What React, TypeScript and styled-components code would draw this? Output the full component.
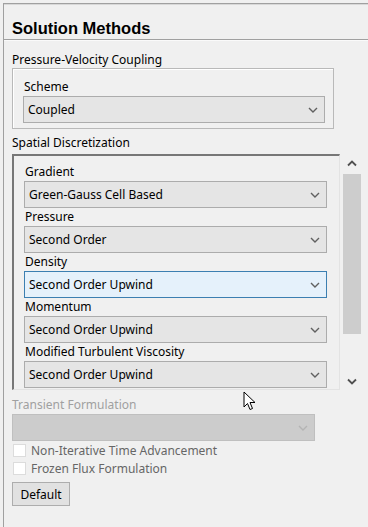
import React from "react";
import styled, { createGlobalStyle } from "styled-components";

const GlobalStyle = createGlobalStyle`
  html, body {
    margin: 0;
    padding: 0;
    background: #f0f0f0;
  }
  body {
    font-family: "Noto Sans", "Open Sans", sans-serif;
    font-size: 12px;
    color: #000;
  }
`;

const Chevron = ({ color = "#606060" }: { color?: string }) => (
  <svg width="10" height="6" viewBox="0 0 10 6">
    <path d="M1 1 L5 5 L9 1" fill="none" stroke={color} strokeWidth="1.4" />
  </svg>
);

type SelectProps = {
  value: string;
  focused?: boolean;
  disabled?: boolean;
  width?: number;
};

const DropDown = ({ value, focused, disabled, width }: SelectProps) => (
  <SelectBox $focused={focused} $disabled={disabled} $width={width}>
    <SelectText>{value}</SelectText>
    <Chevron color={disabled ? "#b4b4b4" : "#606060"} />
  </SelectBox>
);

const fields = [
  { label: "Gradient", value: "Green-Gauss Cell Based" },
  { label: "Pressure", value: "Second Order" },
  { label: "Density", value: "Second Order Upwind", focused: true },
  { label: "Momentum", value: "Second Order Upwind" },
  { label: "Modified Turbulent Viscosity", value: "Second Order Upwind" },
];

const App = () => {
  return (
    <Root>
      <GlobalStyle />
      <Panel>
        <Header>Solution Methods</Header>
        <Body>
          <SectionLabel $top={11}>Pressure-Velocity Coupling</SectionLabel>
          <GroupBox>
            <FieldLabel>Scheme</FieldLabel>
            <DropDown value="Coupled" width={302} />
          </GroupBox>
          <SectionLabel $top={5}>Spatial Discretization</SectionLabel>
          <ScrollArea>
            <ScrollContent>
              {fields.map((f) => (
                <Field key={f.label}>
                  <FieldLabel>{f.label}</FieldLabel>
                  <DropDown value={f.value} focused={f.focused} width={303} />
                </Field>
              ))}
            </ScrollContent>
            <ScrollBar>
              <ArrowBtn>
                <svg width="10" height="7" viewBox="0 0 10 7">
                  <path d="M1 5.5 L5 1.5 L9 5.5" fill="none" stroke="#505050" strokeWidth="1.8" />
                </svg>
              </ArrowBtn>
              <Track>
                <Thumb />
              </Track>
              <ArrowBtn>
                <svg width="10" height="7" viewBox="0 0 10 7">
                  <path d="M1 1.5 L5 5.5 L9 1.5" fill="none" stroke="#505050" strokeWidth="1.8" />
                </svg>
              </ArrowBtn>
            </ScrollBar>
          </ScrollArea>
          <DisabledLabel>Transient Formulation</DisabledLabel>
          <DropDown value="" disabled width={303} />
          <CheckRow>
            <CheckBox />
            <CheckText>Non-Iterative Time Advancement</CheckText>
          </CheckRow>
          <CheckRow>
            <CheckBox />
            <CheckText>Frozen Flux Formulation</CheckText>
          </CheckRow>
          <Button>Default</Button>
        </Body>
      </Panel>
      <Cursor width="13" height="21" viewBox="0 0 13 21">
        <path
          d="M1 1 L1 16 L4.5 12.5 L7 18.5 L9.5 17.5 L7 11.5 L12 11.5 Z"
          fill="#fff"
          stroke="#000"
          strokeWidth="1"
        />
      </Cursor>
    </Root>
  );
};

export default App;

const Root = styled.div`
  position: relative;
  width: 368px;
  height: 527px;
  padding: 3px 0 0 3px;
  box-sizing: border-box;
  overflow: hidden;
`;

const Panel = styled.div`
  height: 100%;
  border-top: 1px solid #a0a0a0;
  border-left: 1px solid #a0a0a0;
  box-shadow: inset 0 1px 0 #d8d8d8;
`;

const Header = styled.div`
  height: 36px;
  padding: 0 0 1px 8px;
  display: flex;
  align-items: flex-end;
  box-sizing: border-box;
  font-family: "Liberation Sans", Arial, sans-serif;
  font-weight: bold;
  font-size: 16.5px;
  border-bottom: 1px solid #a0a0a0;
  box-shadow: 0 1px 0 #fafafa;
`;

const Body = styled.div`
  padding-left: 8px;
  display: flex;
  flex-direction: column;
  align-items: flex-start;
`;

const SectionLabel = styled.div<{ $top: number }>`
  margin-top: ${(p) => p.$top}px;
  height: 18px;
  line-height: 18px;
`;

const GroupBox = styled.div`
  width: 322px;
  height: 61px;
  box-sizing: border-box;
  margin-top: -1px;
  border: 1px solid #b9b9b9;
  box-shadow: inset 1px 1px 0 #fff;
  padding: 9px 0 0 10px;
`;

const FieldLabel = styled.div`
  height: 18px;
  line-height: 18px;
  padding-left: 1px;
`;

const SelectBox = styled.div<{ $focused?: boolean; $disabled?: boolean; $width?: number }>`
  width: ${(p) => p.$width ?? 302}px;
  height: 27px;
  box-sizing: border-box;
  display: flex;
  align-items: center;
  justify-content: space-between;
  padding: 0 6px 0 4px;
  background: ${(p) => (p.$focused ? "#e5f1fb" : p.$disabled ? "#cccccc" : "#e5e5e5")};
  border: 1px solid ${(p) => (p.$focused ? "#3c7fb1" : p.$disabled ? "#bfbfbf" : "#acacac")};
`;

const SelectText = styled.span`
  font-size: 12px;
`;

const ScrollArea = styled.div`
  display: flex;
  height: 236px;
  margin-top: 2px;
`;

const ScrollContent = styled.div`
  width: 328px;
  box-sizing: border-box;
  border-top: 2px solid #777;
  border-left: 2px solid #777;
  border-right: 1px solid #e3e3e3;
  border-bottom: 1px solid #e3e3e3;
  padding: 7px 0 0 10px;
  overflow: hidden;
`;

const Field = styled.div``;

const ScrollBar = styled.div`
  width: 20px;
  margin-left: 1px;
  display: flex;
  flex-direction: column;
`;

const ArrowBtn = styled.div`
  height: 18px;
  display: flex;
  align-items: center;
  justify-content: center;
  padding-left: 2px;
`;

const Track = styled.div`
  flex: 1;
  padding: 2px 0 2px 2px;
  display: flex;
  flex-direction: column;
`;

const Thumb = styled.div`
  height: 160px;
  background: #cdcdcd;
`;

const DisabledLabel = styled.div`
  margin-top: 6px;
  height: 18px;
  line-height: 18px;
  color: #a0a0a0;
`;

const CheckRow = styled.div`
  display: flex;
  align-items: center;
  height: 18px;
`;

const CheckBox = styled.div`
  width: 13px;
  height: 13px;
  margin-left: 1px;
  box-sizing: border-box;
  background: #fff;
  border: 1px solid #dcdcdc;
`;

const CheckText = styled.span`
  margin-left: 5px;
  color: #666;
`;

const Button = styled.div`
  margin-top: 5px;
  width: 58px;
  height: 24px;
  box-sizing: border-box;
  background: #e1e1e1;
  border: 1px solid #adadad;
  display: flex;
  align-items: center;
  justify-content: center;
`;

const Cursor = styled.svg`
  position: absolute;
  left: 243px;
  top: 391px;
`;
